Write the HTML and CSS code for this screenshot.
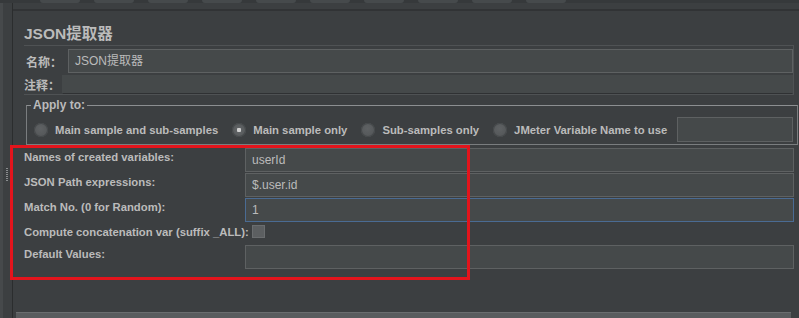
FILE: index.html
```html
<!DOCTYPE html>
<html lang="en">
  <head>
    <meta charset="UTF-8" />
    <title>JSON提取器</title>
    <link rel="stylesheet" href="styles.css">
  </head>
  <body>
    <div class="tabs">
      <span></span><span></span><span></span><span></span><span></span><span></span><span></span><span></span><span></span><span></span>
    </div>
    <div class="shell">
      <div class="gutter"><i class="grip"></i></div>
      <div class="panel">
        <h1>JSON提取器</h1>
        <div class="namebox">
          <div class="row">
            <label class="cn">名称：</label>
            <div class="field">JSON提取器</div>
          </div>
          <div class="row">
            <label class="cn">注释：</label>
            <div class="field plain"></div>
          </div>
        </div>

        <fieldset class="apply">
          <legend>Apply to:</legend>
          <label class="radio"><span class="dot"></span>Main sample and sub-samples</label>
          <label class="radio on"><span class="dot"></span>Main sample only</label>
          <label class="radio"><span class="dot"></span>Sub-samples only</label>
          <label class="radio"><span class="dot"></span>JMeter Variable Name to use</label>
          <div class="field varname"></div>
        </fieldset>

        <div class="props">
          <label>Names of created variables:</label>
          <div class="field">userId</div>
          <label>JSON Path expressions:</label>
          <div class="field">$.user.id</div>
          <label>Match No. (0 for Random):</label>
          <div class="field focus">1</div>
          <label class="concat">Compute concatenation var (suffix _ALL):<span class="check"></span></label>
          <label>Default Values:</label>
          <div class="field"></div>
          <div class="highlight"></div>
        </div>

        <div class="bottombar"></div>
      </div>
    </div>
  </body>
</html>
```

FILE: styles.css
```css
html,
body {
  margin: 0;
  height: 318px;
  overflow: hidden;
}

body {
  background-color: #3c3f41;
  color: #bbbbbb;
  font-family: "Liberation Sans", Arial, "Noto Sans CJK SC", sans-serif;
  font-size: 11.3px;
}

.tabs {
  display: flex;
  gap: 14px;
  height: 3px;
  padding-left: 40px;
  background-color: #36393b;
}

.tabs span {
  width: 40px;
  background-color: #464a4c;
  border-radius: 0 0 6px 6px;
}

.shell {
  display: flex;
  height: 315px;
}

.gutter {
  flex-shrink: 0;
  width: 9px;
  border-left: 3px solid #46494b;
  border-right: 1px solid #2b2d2e;
  position: relative;
}

.grip {
  position: absolute;
  left: 3px;
  top: 165px;
  width: 2px;
  height: 14px;
  background-image: repeating-linear-gradient(#8a8d8f 0 1px, transparent 1px 2px);
}

.panel {
  flex: 1;
  min-width: 0;
  margin-top: 6px;
  border-top: 2px solid #313335;
  padding: 0 5px 0 11px;
  position: relative;
}

h1 {
  margin: 0;
  padding: 10px 0 0;
  height: 24px;
  font-size: 15.5px;
  font-weight: bold;
  color: #bbbbbb;
}

.namebox {
  border: 1px solid #4f5254;
  border-left: none;
  padding: 3px 0 0;
}

.row {
  display: flex;
  align-items: center;
}

.row + .row {
  margin-top: 2px;
}

.cn {
  font-weight: bold;
  width: 42px;
  padding-left: 2px;
  font-size: 12px;
}

.row + .row .cn {
  width: 38px;
  padding-left: 0;
}

.field {
  box-sizing: border-box;
  height: 24px;
  background-color: #45494a;
  border: 1px solid #5e6162;
  padding: 0 6px;
  line-height: 22px;
  font-size: 12px;
  font-weight: normal;
  color: #bbbbbb;
}

.row .field {
  flex: 1;
}

.field.plain {
  height: 19px;
  border-color: #45494a;
  border-bottom-color: #2f3133;
}

.apply {
  margin: 3px 0 0 2px;
  padding: 5px 4px 2px 7px;
  border: 1px solid #7a7d7f;
  border-top-color: #8c8f91;
  display: flex;
  align-items: center;
  gap: 14px;
  font-weight: bold;
  white-space: nowrap;
}

.apply legend {
  padding: 0 2px;
  margin-left: -3px;
  font-size: 12px;
}

.radio {
  display: flex;
  align-items: center;
  gap: 7px;
}

.radio + .radio {
  margin-left: 0;
}

.dot {
  width: 14px;
  height: 14px;
  border-radius: 50%;
  background: radial-gradient(circle at 45% 40%, #5f6264, #505355);
  box-shadow: inset 0 0 0 1px #46494b;
}

.radio.on .dot {
  background: radial-gradient(circle, #cfcfcf 0 2px, #5f6264 2.5px, #505355);
}

.field.varname {
  width: 116px;
  height: 25px;
  margin-left: -4px;
}

.props {
  position: relative;
  display: grid;
  grid-template-columns: 221px 1fr;
  row-gap: 1px;
  margin-top: 3px;
  font-weight: bold;
}

.props label {
  padding-top: 3px;
  height: 20px;
}

.field.focus {
  border-color: #4a6b93;
}

.props .concat {
  grid-column: 1 / 3;
  display: flex;
  gap: 3px;
  padding-top: 3px;
  height: 18px;
}

.check {
  width: 11px;
  height: 11px;
  margin-top: -1px;
  background-color: #5c5f61;
  border: 1px solid #6a6d6f;
}

.highlight {
  position: absolute;
  left: -14px;
  top: -3px;
  width: 454px;
  height: 129px;
  border: 3px solid #e3141c;
}

.bottombar {
  position: absolute;
  left: 3px;
  right: 8px;
  top: 301px;
  height: 10px;
  background-color: #595c5e;
  border-top: 1px solid #6a6d6f;
}
```
